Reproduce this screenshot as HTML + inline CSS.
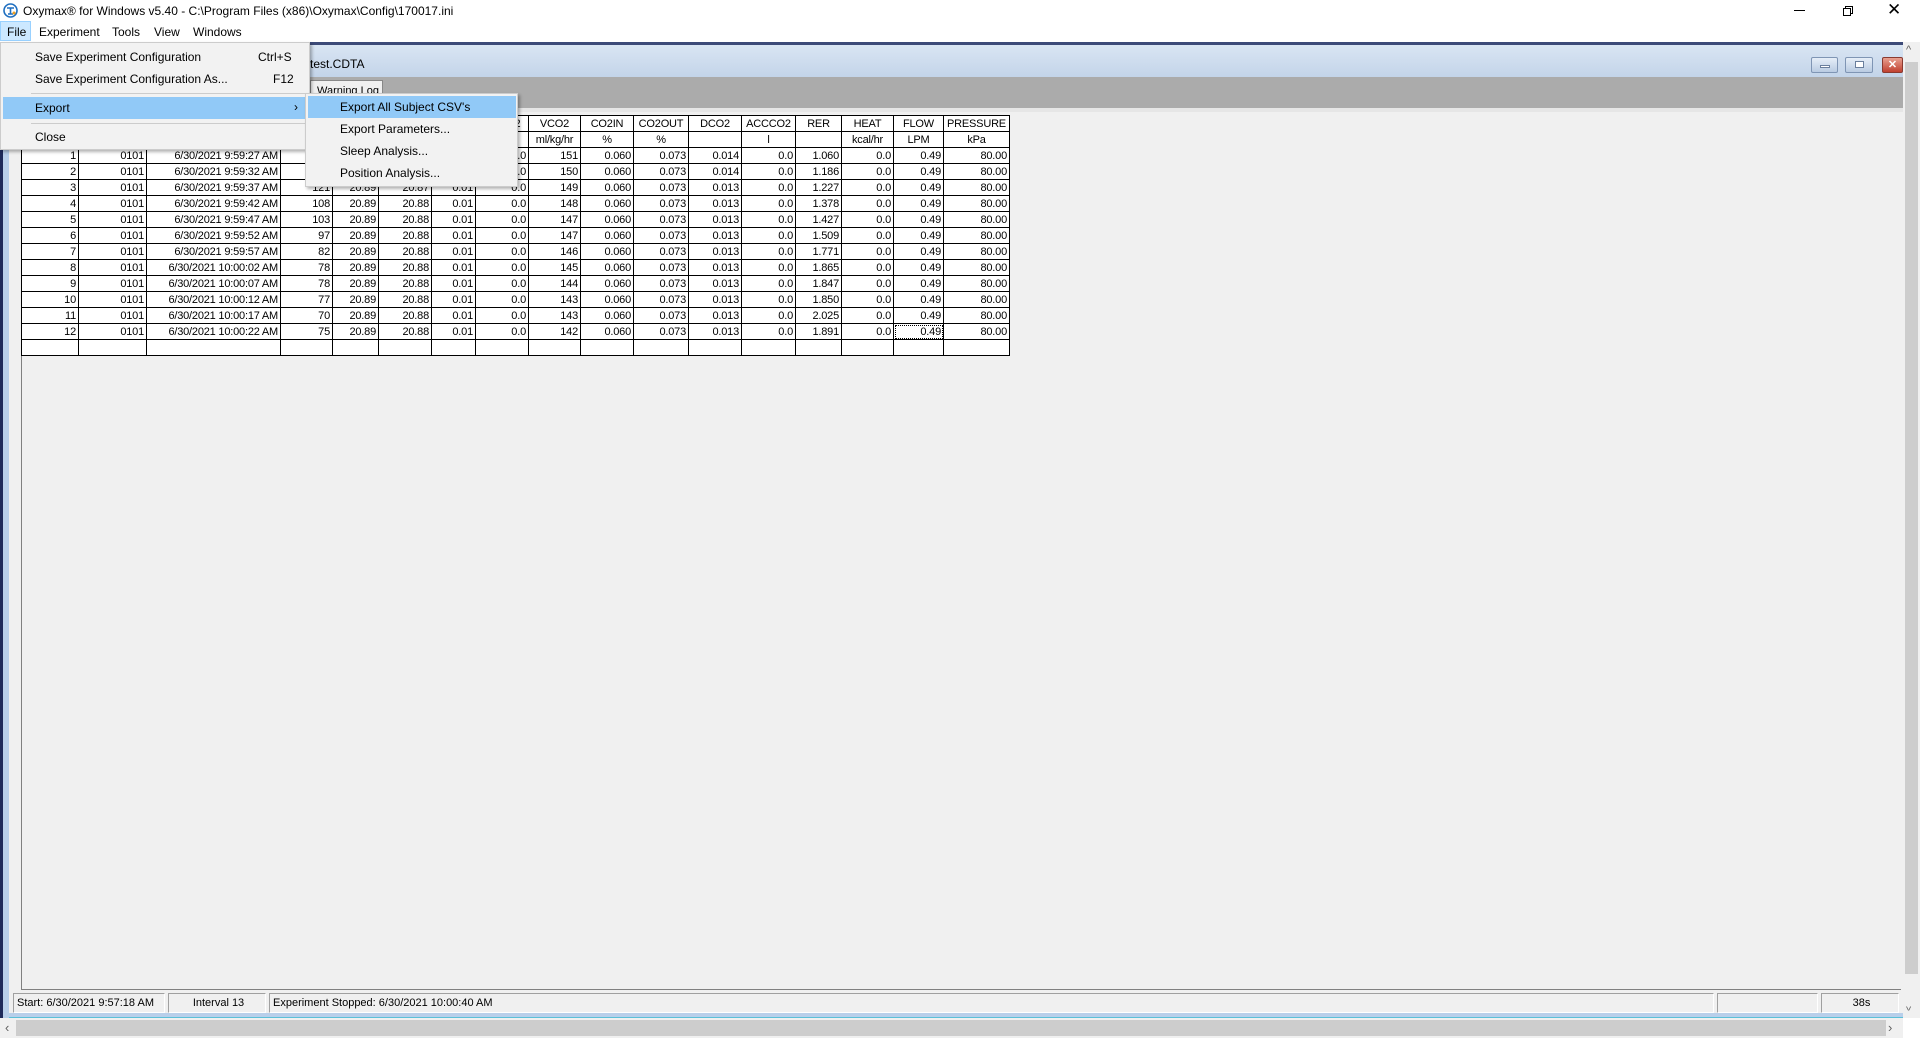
<!DOCTYPE html>
<html><head><meta charset="utf-8"><style>
*{margin:0;padding:0;box-sizing:border-box}
body{width:1920px;height:1038px;background:#fff;position:relative;overflow:hidden;font-family:"Liberation Sans",sans-serif;font-size:12px;color:#000}
.a{position:absolute}
#title{left:0;top:0;width:1920px;height:21px;background:#fff}
#menubar{left:0;top:21px;width:1920px;height:21px;background:#fff}
.mi{position:absolute;top:4px;font-size:12px}
#child{left:0;top:42px;width:1903px;height:976px;background:#f0f0f0}
table{border-collapse:collapse;table-layout:fixed;font-size:11px;letter-spacing:-0.2px}
td{border:1px solid #000;height:16px;padding:0 2px 0 0;text-align:right;white-space:nowrap;overflow:hidden;line-height:14px;background:#fff}
tr.h td{text-align:center;padding:0}
.menu{background:#f2f2f2;border:1px solid #ccc;box-shadow:2px 2px 3px rgba(0,0,0,.3)}
.it{position:absolute;font-size:12px}
.hl{position:absolute;background:#91c9f7}
.sp{position:absolute;top:993px;height:20px;border:1px solid #a0a0a0;border-right-color:#fff;border-bottom-color:#fff;font-size:11px;line-height:18px;padding-left:3px}
</style></head><body>
<div class="a" id="title">
 <svg class="a" style="left:3px;top:3px" width="15" height="15"><circle cx="7.5" cy="7.5" r="6.5" fill="none" stroke="#1f6fc0" stroke-width="1.6"/><path d="M4 5h7M7.5 5v6M5 11h5" stroke="#1f6fc0" stroke-width="1.6"/><circle cx="11" cy="10" r="1.5" fill="#f0a020"/></svg>
 <div class="a" style="left:23px;top:4px;font-size:12px">Oxymax® for Windows v5.40 - C:\Program Files (x86)\Oxymax\Config\170017.ini</div>
 <div class="a" style="left:1794px;top:10px;width:11px;height:1px;background:#000"></div>
 <div class="a" style="left:1845px;top:6px;width:8px;height:8px;border:1px solid #000"></div>
 <div class="a" style="left:1843px;top:8px;width:8px;height:8px;border:1px solid #000;background:#fff"></div>
 <div class="a" style="left:1887px;top:0px;font-size:17px;font-weight:normal">✕</div>
</div>
<div class="a" id="menubar">
 <div class="a" style="left:0;top:0;width:31px;height:20px;background:#cce8ff;border:1px solid #99d1ff"></div>
 <div class="mi" style="left:7px">File</div>
 <div class="mi" style="left:39px">Experiment</div>
 <div class="mi" style="left:112px">Tools</div>
 <div class="mi" style="left:154px">View</div>
 <div class="mi" style="left:193px">Windows</div>
</div>
<div class="a" id="child">
 <div class="a" style="left:0;top:0;width:3px;height:976px;background:#1e2a5a"></div>
 <div class="a" style="left:3px;top:0;width:6px;height:976px;background:#b8cfea"></div>
 <div class="a" style="left:0;top:0;width:1903px;height:3px;background:#3c4a78"></div>
 <div class="a" style="left:9px;top:3px;width:1894px;height:32px;background:linear-gradient(#d9e5f3,#c3d4e9)"></div>
 <div class="a" style="left:300px;top:15px;font-size:12px">0 test.CDTA</div>
 <div class="a" style="left:1811px;top:15px;width:27px;height:16px;border:1px solid #7f95b4;border-radius:2px;background:linear-gradient(#e6eef8,#b9cbe2)"><div class="a" style="left:8px;top:7px;width:10px;height:3px;background:#fff;border:1px solid #6a7f9d"></div></div>
 <div class="a" style="left:1845px;top:15px;width:28px;height:16px;border:1px solid #7f95b4;border-radius:2px;background:linear-gradient(#e6eef8,#b9cbe2)"><div class="a" style="left:9px;top:3px;width:9px;height:7px;background:#fff;border:1px solid #6a7f9d"></div></div>
 <div class="a" style="left:1882px;top:15px;width:21px;height:16px;border:1px solid #8a3a30;border-radius:2px;background:linear-gradient(#e8a090,#c04030);color:#fff;font-size:11px;font-weight:bold;text-align:center;line-height:14px">✕</div>
 <div class="a" style="left:9px;top:35px;width:1894px;height:31px;background:#ababab"></div>
 <div class="a" style="left:310px;top:38px;width:73px;height:28px;background:#f0f0f0;border:1px solid #888;border-bottom:none;font-size:11px;padding:4px 0 0 6px">Warning Log</div>
 <div class="a" style="left:9px;top:66px;width:1894px;height:4px;background:#e6e6e6"></div>
 <div class="a" style="left:21px;top:70px;width:1px;height:878px;background:#808080"></div>
 <div class="a" style="left:21px;top:947px;width:1880px;height:1px;background:#808080"></div>
 <div class="a" style="left:9px;top:971px;width:1894px;height:5px;background:#b8cfea;border-bottom:1px solid #5bc0d8"></div>
</div>
<table class="a" style="left:21px;top:115px;width:989px">
<colgroup><col style="width:57px"><col style="width:68px"><col style="width:134px"><col style="width:52px"><col style="width:46px"><col style="width:53px"><col style="width:44px"><col style="width:53px"><col style="width:52px"><col style="width:53px"><col style="width:55px"><col style="width:53px"><col style="width:54px"><col style="width:46px"><col style="width:52px"><col style="width:50px"><col style="width:66px"></colgroup>
<tr class="h"><td>INTERVAL</td><td>CHAN</td><td>TIME</td><td>VO2</td><td>O2IN</td><td>O2OUT</td><td>DO2</td><td>ACCO2</td><td>VCO2</td><td>CO2IN</td><td>CO2OUT</td><td>DCO2</td><td>ACCCO2</td><td>RER</td><td>HEAT</td><td>FLOW</td><td>PRESSURE</td></tr>
<tr class="h"><td></td><td></td><td></td><td>ml/kg/hr</td><td>%</td><td>%</td><td></td><td>l</td><td>ml/kg/hr</td><td>%</td><td>%</td><td></td><td>l</td><td></td><td>kcal/hr</td><td>LPM</td><td>kPa</td></tr>
<tr><td>1</td><td>0101</td><td>6/30/2021 9:59:27 AM</td><td>142</td><td>20.89</td><td>20.87</td><td>0.01</td><td>0.0</td><td>151</td><td>0.060</td><td>0.073</td><td>0.014</td><td>0.0</td><td>1.060</td><td>0.0</td><td>0.49</td><td>80.00</td></tr>
<tr><td>2</td><td>0101</td><td>6/30/2021 9:59:32 AM</td><td>126</td><td>20.89</td><td>20.87</td><td>0.01</td><td>0.0</td><td>150</td><td>0.060</td><td>0.073</td><td>0.014</td><td>0.0</td><td>1.186</td><td>0.0</td><td>0.49</td><td>80.00</td></tr>
<tr><td>3</td><td>0101</td><td>6/30/2021 9:59:37 AM</td><td>121</td><td>20.89</td><td>20.87</td><td>0.01</td><td>0.0</td><td>149</td><td>0.060</td><td>0.073</td><td>0.013</td><td>0.0</td><td>1.227</td><td>0.0</td><td>0.49</td><td>80.00</td></tr>
<tr><td>4</td><td>0101</td><td>6/30/2021 9:59:42 AM</td><td>108</td><td>20.89</td><td>20.88</td><td>0.01</td><td>0.0</td><td>148</td><td>0.060</td><td>0.073</td><td>0.013</td><td>0.0</td><td>1.378</td><td>0.0</td><td>0.49</td><td>80.00</td></tr>
<tr><td>5</td><td>0101</td><td>6/30/2021 9:59:47 AM</td><td>103</td><td>20.89</td><td>20.88</td><td>0.01</td><td>0.0</td><td>147</td><td>0.060</td><td>0.073</td><td>0.013</td><td>0.0</td><td>1.427</td><td>0.0</td><td>0.49</td><td>80.00</td></tr>
<tr><td>6</td><td>0101</td><td>6/30/2021 9:59:52 AM</td><td>97</td><td>20.89</td><td>20.88</td><td>0.01</td><td>0.0</td><td>147</td><td>0.060</td><td>0.073</td><td>0.013</td><td>0.0</td><td>1.509</td><td>0.0</td><td>0.49</td><td>80.00</td></tr>
<tr><td>7</td><td>0101</td><td>6/30/2021 9:59:57 AM</td><td>82</td><td>20.89</td><td>20.88</td><td>0.01</td><td>0.0</td><td>146</td><td>0.060</td><td>0.073</td><td>0.013</td><td>0.0</td><td>1.771</td><td>0.0</td><td>0.49</td><td>80.00</td></tr>
<tr><td>8</td><td>0101</td><td>6/30/2021 10:00:02 AM</td><td>78</td><td>20.89</td><td>20.88</td><td>0.01</td><td>0.0</td><td>145</td><td>0.060</td><td>0.073</td><td>0.013</td><td>0.0</td><td>1.865</td><td>0.0</td><td>0.49</td><td>80.00</td></tr>
<tr><td>9</td><td>0101</td><td>6/30/2021 10:00:07 AM</td><td>78</td><td>20.89</td><td>20.88</td><td>0.01</td><td>0.0</td><td>144</td><td>0.060</td><td>0.073</td><td>0.013</td><td>0.0</td><td>1.847</td><td>0.0</td><td>0.49</td><td>80.00</td></tr>
<tr><td>10</td><td>0101</td><td>6/30/2021 10:00:12 AM</td><td>77</td><td>20.89</td><td>20.88</td><td>0.01</td><td>0.0</td><td>143</td><td>0.060</td><td>0.073</td><td>0.013</td><td>0.0</td><td>1.850</td><td>0.0</td><td>0.49</td><td>80.00</td></tr>
<tr><td>11</td><td>0101</td><td>6/30/2021 10:00:17 AM</td><td>70</td><td>20.89</td><td>20.88</td><td>0.01</td><td>0.0</td><td>143</td><td>0.060</td><td>0.073</td><td>0.013</td><td>0.0</td><td>2.025</td><td>0.0</td><td>0.49</td><td>80.00</td></tr>
<tr><td>12</td><td>0101</td><td>6/30/2021 10:00:22 AM</td><td>75</td><td>20.89</td><td>20.88</td><td>0.01</td><td>0.0</td><td>142</td><td>0.060</td><td>0.073</td><td>0.013</td><td>0.0</td><td>1.891</td><td>0.0</td><td style="outline:1px dotted #000;outline-offset:-2px">0.49</td><td>80.00</td></tr>
<tr><td></td><td></td><td></td><td></td><td></td><td></td><td></td><td></td><td></td><td></td><td></td><td></td><td></td><td></td><td></td><td></td><td></td></tr>
</table>
<div class="a menu" style="left:0;top:42px;width:310px;height:108px">
 <div class="it" style="left:34px;top:7px">Save Experiment Configuration</div>
 <div class="it" style="left:257px;top:7px">Ctrl+S</div>
 <div class="it" style="left:34px;top:29px">Save Experiment Configuration As...</div>
 <div class="it" style="left:272px;top:29px">F12</div>
 <div class="a" style="left:30px;top:50px;width:276px;height:1px;background:#ccc"></div>
 <div class="hl" style="left:2px;top:54px;width:305px;height:22px"></div>
 <div class="it" style="left:34px;top:58px">Export</div>
 <div class="it" style="left:293px;top:57px">›</div>
 <div class="a" style="left:30px;top:80px;width:276px;height:1px;background:#ccc"></div>
 <div class="it" style="left:34px;top:87px">Close</div>
</div>
<div class="a menu" style="left:305px;top:93px;width:213px;height:94px">
 <div class="hl" style="left:2px;top:2px;width:208px;height:22px"></div>
 <div class="it" style="left:34px;top:6px">Export All Subject CSV's</div>
 <div class="it" style="left:34px;top:28px">Export Parameters...</div>
 <div class="it" style="left:34px;top:50px">Sleep Analysis...</div>
 <div class="it" style="left:34px;top:72px">Position Analysis...</div>
</div>
<div class="sp" style="left:13px;width:152px">Start: 6/30/2021 9:57:18 AM</div>
<div class="sp" style="left:168px;width:98px;text-align:center">Interval 13</div>
<div class="sp" style="left:269px;width:1445px">Experiment Stopped: 6/30/2021 10:00:40 AM</div>
<div class="sp" style="left:1717px;width:101px"></div>
<div class="sp" style="left:1821px;width:78px;text-align:center">38s</div>
<div class="a" style="left:1903px;top:42px;width:17px;height:976px;background:#f0f0f0"></div>
<div class="a" style="left:1905px;top:62px;width:13px;height:912px;background:#cdcdcd"></div>
<div class="a" style="left:1906px;top:44px;font-size:11px;color:#606060">^</div>
<div class="a" style="left:1906px;top:1000px;font-size:11px;color:#606060;transform:scaleY(-1)">^</div>
<div class="a" style="left:0;top:1018px;width:1903px;height:20px;background:#f0f0f0"></div>
<div class="a" style="left:16px;top:1020px;width:1870px;height:16px;background:#cdcdcd"></div>
<div class="a" style="left:5px;top:1020px;font-size:13px;color:#606060">‹</div>
<div class="a" style="left:1888px;top:1020px;font-size:13px;color:#606060">›</div>
</body></html>
